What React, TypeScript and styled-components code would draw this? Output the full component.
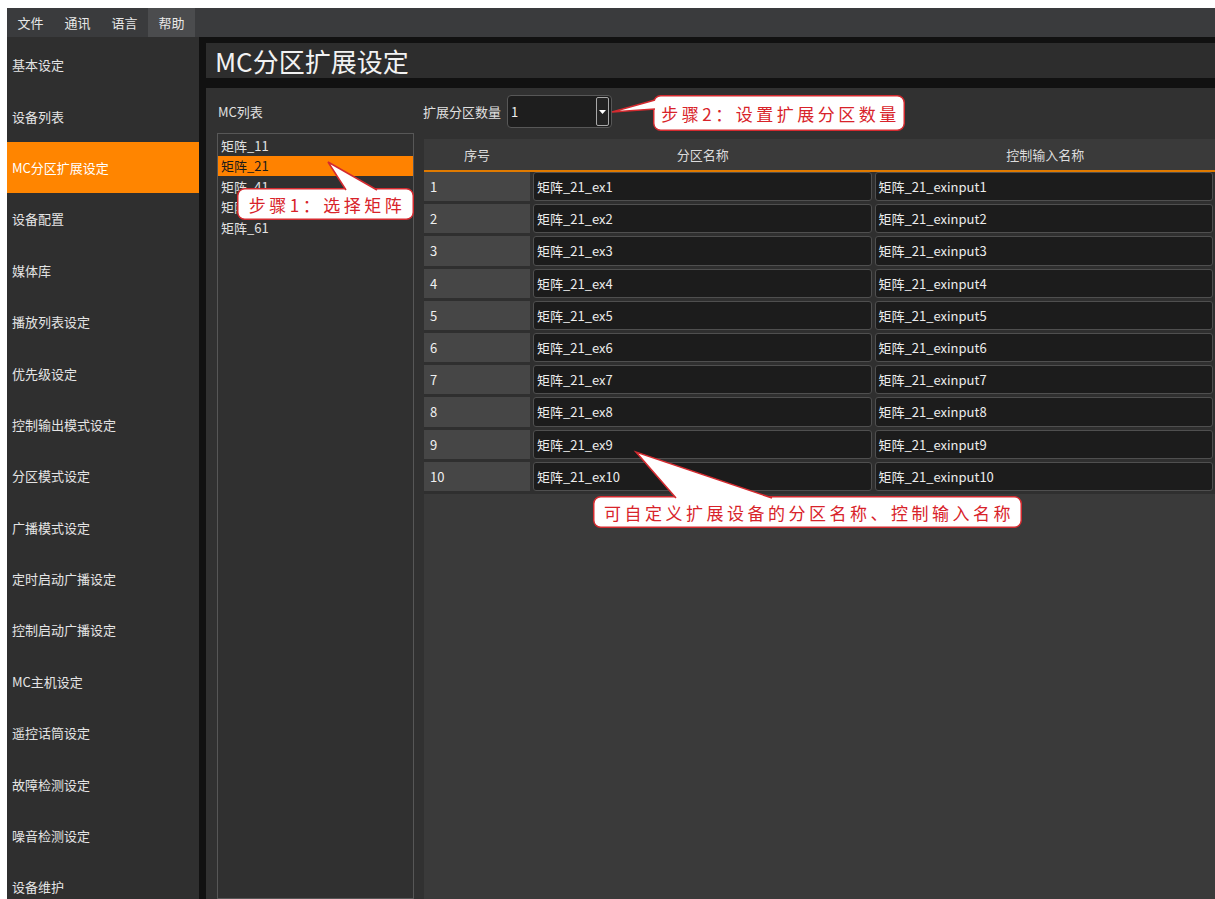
import React from "react";
import styled, { createGlobalStyle } from "styled-components";

const GlobalStyle = createGlobalStyle`
  html, body {
    margin: 0;
    background: #ffffff;
  }
  body {
    font-family: "Noto Sans CJK SC", "Noto Sans", sans-serif;
  }
  * {
    box-sizing: border-box;
  }
`;

const Screen = styled.div`
  width: 1215px;
  height: 899px;
  padding: 8px 0 0 7px;
  overflow: hidden;
`;

const Window = styled.div`
  display: flex;
  flex-direction: column;
  height: 100%;
  background: #111111;
`;

const MenuBar = styled.div`
  display: flex;
  height: 29px;
  background: #3a3b3d;
`;

const MenuItem = styled.div<{ $active?: boolean }>`
  width: 47px;
  display: flex;
  align-items: center;
  justify-content: center;
  font-size: 13px;
  color: #e8e8e8;
  background: ${(p) => (p.$active ? "#4b4c4e" : "transparent")};
`;

const Body = styled.div`
  flex: 1;
  display: flex;
  min-height: 0;
`;

const Sidebar = styled.div`
  width: 192px;
  padding-top: 2px;
  background: #2f2f2f;
  display: flex;
  flex-direction: column;
`;

const NavItem = styled.div<{ $active?: boolean }>`
  height: 51.4px;
  flex-shrink: 0;
  display: flex;
  align-items: center;
  padding-left: 5px;
  font-size: 13px;
  color: ${(p) => (p.$active ? "#ffffff" : "#e4e4e4")};
  background: ${(p) => (p.$active ? "#ff8500" : "transparent")};
`;

const Main = styled.div`
  flex: 1;
  display: flex;
  flex-direction: column;
  padding: 6px 0 0 7px;
  background: #111111;
`;

const TitleBar = styled.div`
  height: 35px;
  margin-bottom: 10px;
  padding-left: 9px;
  display: flex;
  align-items: center;
  background: #2d2d2d;
  color: #f2f2f2;
  font-size: 26px;
`;

const Panel = styled.div`
  position: relative;
  flex: 1;
  display: flex;
  gap: 10px;
  padding-left: 11px;
  background: #313131;
  min-height: 0;
`;

const ListColumn = styled.div`
  width: 197px;
  display: flex;
  flex-direction: column;
`;

const Caption = styled.div`
  height: 45px;
  padding: 14px 0 0 1px;
  font-size: 13px;
  line-height: 20px;
  color: #e0e0e0;
`;

const ListBox = styled.div`
  flex: 1;
  border: 1px solid #575757;
  background: #303030;
  padding-top: 1px;
`;

const ListItem = styled.div<{ $selected?: boolean }>`
  height: 20.5px;
  padding-left: 3px;
  display: flex;
  align-items: center;
  font-size: 13px;
  color: ${(p) => (p.$selected ? "#1a1a1a" : "#e2e2e2")};
  background: ${(p) => (p.$selected ? "#ff8200" : "transparent")};
`;

const TableColumn = styled.div`
  flex: 1;
  display: flex;
  flex-direction: column;
`;

const Toolbar = styled.div`
  height: 51px;
  display: flex;
  align-items: flex-start;
  padding-top: 7px;
  gap: 6px;
`;

const ToolLabel = styled.div`
  height: 33px;
  margin-left: -1px;
  display: flex;
  align-items: center;
  font-size: 13px;
  color: #e0e0e0;
`;

const Combo = styled.div`
  width: 105px;
  height: 33px;
  display: flex;
  align-items: center;
  justify-content: space-between;
  padding: 0 2px 0 3px;
  border: 1px solid #575757;
  border-radius: 4px;
  background: #1e1e1e;
  color: #eeeeee;
  font-size: 13px;
`;

const ComboButton = styled.div`
  width: 13px;
  height: 29px;
  display: flex;
  align-items: center;
  justify-content: center;
  border: 1px solid #a8a8a8;
  border-radius: 2px;
  background: #232323;
`;

const Table = styled.div`
  flex: 1;
  background: #3a3a3a;
`;

const HeaderRow = styled.div`
  display: grid;
  grid-template-columns: 106px 1fr 1fr;
  column-gap: 3px;
  height: 33px;
  border-bottom: 2px solid #e07a00;
`;

const HeaderCell = styled.div`
  display: flex;
  align-items: center;
  justify-content: center;
  font-size: 13px;
  color: #dcdcdc;
`;

const Rows = styled.div`
  display: flex;
  flex-direction: column;
  gap: 3px;
  padding-bottom: 3px;
  background: #2f2f2f;
`;

const Row = styled.div`
  display: grid;
  grid-template-columns: 106px 1fr 1fr;
  column-gap: 3px;
  padding-right: 2px;
  height: 29.2px;
`;

const IndexCell = styled.div`
  display: flex;
  align-items: center;
  padding-left: 6px;
  font-size: 13px;
  color: #f0f0f0;
  background: #464646;
`;

const EditCell = styled.div`
  display: flex;
  align-items: center;
  padding-left: 3px;
  font-size: 13px;
  color: #ececec;
  background: #1c1c1c;
  border: 1px solid #4f4f4f;
  border-radius: 3px;
`;

/* red-bordered speech bubble laid over the form */
const Bubble = styled.div<{ $x: number; $y: number; $w: number; $h: number }>`
  position: absolute;
  left: ${(p) => p.$x}px;
  top: ${(p) => p.$y}px;
  width: ${(p) => p.$w}px;
  height: ${(p) => p.$h}px;
`;

const BubbleShape = styled.svg`
  position: absolute;
  left: 0;
  top: 0;
  overflow: visible;
`;

const BubbleText = styled.div`
  position: relative;
  height: 100%;
  display: flex;
  align-items: center;
  justify-content: center;
  padding-left: 3px;
  font-size: 17px;
  letter-spacing: 3.5px;
  color: #d8232a;
  white-space: nowrap;
`;

type CalloutProps = {
  x: number;
  y: number;
  w: number;
  h: number;
  tail: number[];
  text: string;
};

const Callout = ({ x, y, w, h, tail, text }: CalloutProps) => {
  const [ax, ay, tx, ty, bx, by] = tail;
  return (
    <Bubble $x={x} $y={y} $w={w} $h={h}>
      <BubbleShape width={w} height={h}>
        <rect
          x={0.75}
          y={0.75}
          width={w - 1.5}
          height={h - 1.5}
          rx={7}
          fill="#ffffff"
          stroke="#d42a2f"
          strokeWidth={1.5}
        />
        <path
          d={`M${ax} ${ay} L${tx} ${ty} L${bx} ${by}`}
          fill="#ffffff"
          stroke="#d42a2f"
          strokeWidth={1.5}
          strokeLinejoin="miter"
        />
      </BubbleShape>
      <BubbleText>{text}</BubbleText>
    </Bubble>
  );
};

const menus = ["文件", "通讯", "语言", "帮助"];

const navs = [
  "基本设定",
  "设备列表",
  "MC分区扩展设定",
  "设备配置",
  "媒体库",
  "播放列表设定",
  "优先级设定",
  "控制输出模式设定",
  "分区模式设定",
  "广播模式设定",
  "定时启动广播设定",
  "控制启动广播设定",
  "MC主机设定",
  "遥控话筒设定",
  "故障检测设定",
  "噪音检测设定",
  "设备维护",
];

const matrices = ["矩阵_11", "矩阵_21", "矩阵_41", "矩阵_51", "矩阵_61"];

const rows = Array.from({ length: 10 }, (_, i) => i + 1);

export default function App() {
  return (
    <>
      <GlobalStyle />
      <Screen>
        <Window>
          <MenuBar>
            {menus.map((m) => (
              <MenuItem key={m} $active={m === "帮助"}>
                {m}
              </MenuItem>
            ))}
          </MenuBar>
          <Body>
            <Sidebar>
              {navs.map((n) => (
                <NavItem key={n} $active={n === "MC分区扩展设定"}>
                  {n}
                </NavItem>
              ))}
            </Sidebar>
            <Main>
              <TitleBar>MC分区扩展设定</TitleBar>
              <Panel>
                <ListColumn>
                  <Caption>MC列表</Caption>
                  <ListBox>
                    {matrices.map((m) => (
                      <ListItem key={m} $selected={m === "矩阵_21"}>
                        {m}
                      </ListItem>
                    ))}
                  </ListBox>
                </ListColumn>
                <TableColumn>
                  <Toolbar>
                    <ToolLabel>扩展分区数量</ToolLabel>
                    <Combo>
                      <span>1</span>
                      <ComboButton>
                        <svg width="7" height="4" viewBox="0 0 7 4">
                          <path d="M0 0 H7 L3.5 4 Z" fill="#ffffff" />
                        </svg>
                      </ComboButton>
                    </Combo>
                  </Toolbar>
                  <Table>
                    <HeaderRow>
                      <HeaderCell>序号</HeaderCell>
                      <HeaderCell>分区名称</HeaderCell>
                      <HeaderCell>控制输入名称</HeaderCell>
                    </HeaderRow>
                    <Rows>
                      {rows.map((n) => (
                        <Row key={n}>
                          <IndexCell>{n}</IndexCell>
                          <EditCell>矩阵_21_ex{n}</EditCell>
                          <EditCell>矩阵_21_exinput{n}</EditCell>
                        </Row>
                      ))}
                    </Rows>
                  </Table>
                </TableColumn>
                <Callout
                  x={31}
                  y={100}
                  w={177}
                  h={32}
                  tail={[109, 2, 91, -26, 140, 2]}
                  text="步骤1：选择矩阵"
                />
                <Callout
                  x={447}
                  y={7}
                  w={252}
                  h={36}
                  tail={[2, 5, -41, 17, 2, 14]}
                  text="步骤2：设置扩展分区数量"
                />
                <Callout
                  x={387}
                  y={408}
                  w={429}
                  h={32}
                  tail={[83, 2, 43, -44, 179, 2]}
                  text="可自定义扩展设备的分区名称、控制输入名称"
                />
              </Panel>
            </Main>
          </Body>
        </Window>
      </Screen>
    </>
  );
}
